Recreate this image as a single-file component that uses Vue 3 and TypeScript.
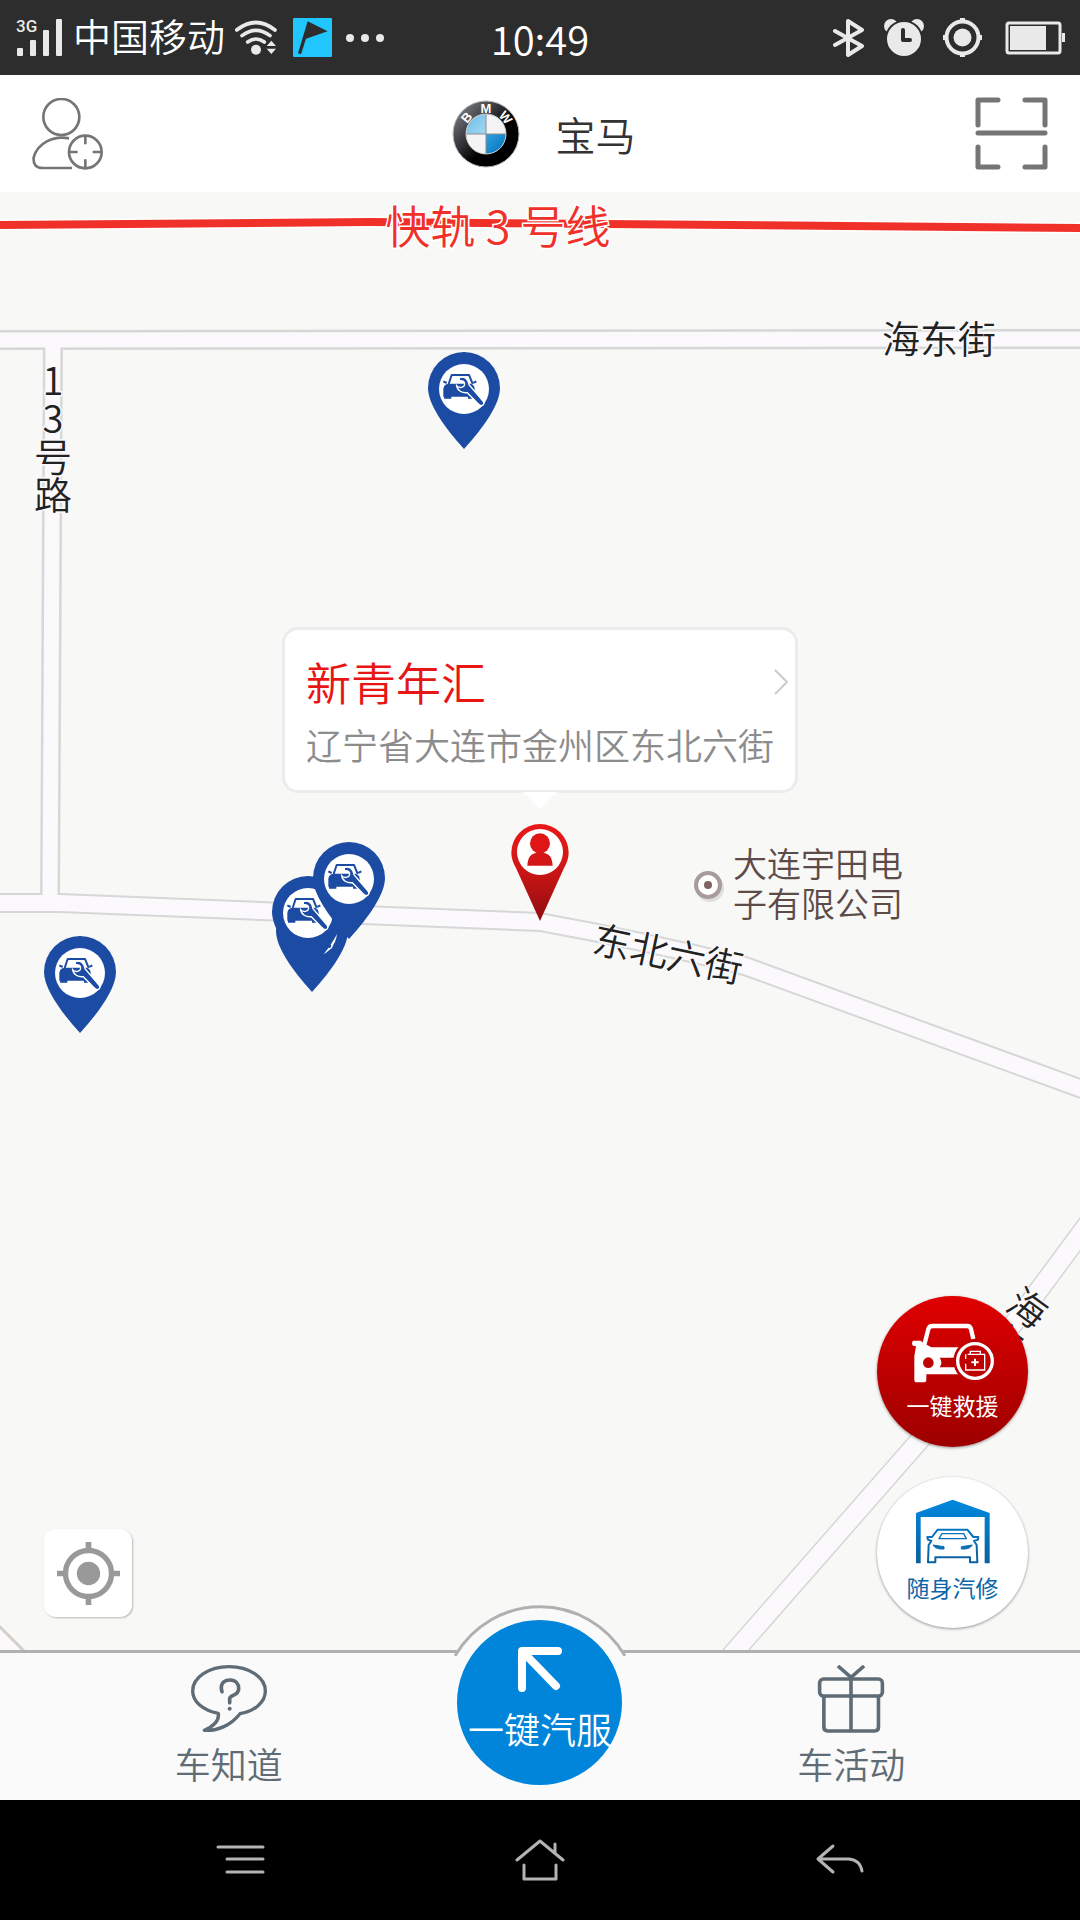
<script setup lang="ts">
interface Pin {
  id: number
  x: number
  y: number
}

interface Road {
  d: string
  casing: number
  surface: number
}

// Pin positions are the top-left corner of the marker on the map canvas.
const pins: Pin[] = [
  { id: 1, x: 428, y: 160 },
  { id: 2, x: 276, y: 703 },
  { id: 3, x: 272, y: 684 },
  { id: 4, x: 313, y: 650 },
  { id: 5, x: 44, y: 744 },
]

const roads: Road[] = [
  { d: 'M-10 148 L1090 147', casing: 20, surface: 15 },
  { d: 'M53 147 L50 711', casing: 20, surface: 15 },
  { d: 'M-10 711 H60 L540 730 Q640 748 745 774 L1090 900', casing: 20, surface: 16 },
  { d: 'M1090 1029 L1022 1121 L919 1249 L728 1467', casing: 21, surface: 18 },
]

const place = { name: '新青年汇', address: '辽宁省大连市金州区东北六街' }
</script>

<template>
  <div class="screen">
    <header class="status">
      <div class="status-side">
        <svg width="48" height="38" viewBox="-1 0 48 38" fill="#e9e9e9" aria-hidden="true">
          <text x="0" y="13" class="net">3G</text>
          <rect x="1" y="29" width="6" height="8" rx="1" />
          <rect x="14" y="21" width="6" height="16" rx="1" />
          <rect x="27" y="11" width="6" height="26" rx="1" />
          <rect x="40" y="0" width="6" height="37" rx="1" />
        </svg>
        <span class="carrier">中国移动</span>
        <svg width="42" height="36" viewBox="708 58 126 108" fill="none" stroke="#e9e9e9" stroke-width="11" stroke-linecap="round" aria-hidden="true">
          <path d="M713 88 Q771 43 828 88" />
          <path d="M729 105 Q771 73 813 105" />
          <path d="M746 124 Q771 106 796 124" />
          <circle cx="771" cy="147" r="15" fill="#e9e9e9" stroke="none" />
          <path d="M803 136 L817 120 L831 136Z M803 144 L817 160 L831 144Z" fill="#e9e9e9" stroke="none" />
        </svg>
        <div class="notices">
          <svg width="39" height="39" viewBox="882 54 117 117" aria-hidden="true">
            <rect x="882" y="54" width="117" height="117" rx="3" fill="#22c6ff" />
            <path d="M926 64 L986 94 L921 116 L906 163 L897 160Z" fill="#2d2d2d" />
          </svg>
          <svg width="38" height="8" viewBox="0 0 38 8" fill="#e9e9e9" aria-hidden="true">
            <circle cx="4" cy="4" r="4" /><circle cx="19" cy="4" r="4" /><circle cx="34" cy="4" r="4" />
          </svg>
        </div>
      </div>
      <time class="clock">10:49</time>
      <div class="status-side end">
        <svg width="32" height="38" viewBox="0 0 32 38" fill="none" stroke="#e9e9e9" stroke-width="4" stroke-linejoin="round" stroke-linecap="round" aria-hidden="true">
          <path d="M2 12 L29 27 L15 36 V2 L29 11 L2 26" />
        </svg>
        <svg width="40" height="37" viewBox="0 0 40 37" aria-hidden="true">
          <circle cx="7" cy="7" r="7" fill="#e9e9e9" /><circle cx="33" cy="7" r="7" fill="#e9e9e9" />
          <circle cx="20" cy="20" r="18" fill="#e9e9e9" stroke="#2d2d2d" stroke-width="2" />
          <path d="M19 11 V21 H26" fill="none" stroke="#2d2d2d" stroke-width="4" stroke-linecap="round" stroke-linejoin="round" />
        </svg>
        <svg width="39" height="39" viewBox="0 0 39 39" fill="none" stroke="#e9e9e9" aria-hidden="true">
          <circle cx="19.5" cy="19.5" r="16" stroke-width="4" />
          <circle cx="19.5" cy="19.5" r="9" fill="#e9e9e9" stroke="none" />
          <path d="M19.5 0 V4 M19.5 35 V39 M0 19.5 H4 M35 19.5 H39" stroke-width="5" />
        </svg>
        <svg width="64" height="34" viewBox="-5 0 64 34" fill="none" aria-hidden="true">
          <rect x="1" y="2" width="53" height="30" rx="2" stroke="#e9e9e9" stroke-width="3" />
          <rect x="4" y="5" width="36" height="24" fill="#e9e9e9" />
          <rect x="56" y="12" width="3" height="9" fill="#e9e9e9" />
        </svg>
      </div>
    </header>

    <div class="topbar">
      <button type="button" class="plain" aria-label="我的">
        <svg width="71" height="72" viewBox="96 294 213 216" fill="none" stroke="#757575" stroke-width="8">
          <circle cx="184" cy="351" r="54" />
          <path d="M207 415 C160 405 112 430 101 472 Q98 504 128 504 H216" />
          <circle cx="256" cy="456" r="49" />
          <path d="M256 407 V433 M256 478 V504 M207 456 H233 M278 456 H304" />
        </svg>
      </button>
      <button type="button" class="plain brand">
        <svg width="68" height="68" viewBox="-34 -34 68 68" aria-hidden="true">
          <defs>
            <linearGradient id="rim" x1="0.1" y1="0.1" x2="0.6" y2="0.6">
              <stop offset="0" stop-color="#77797c" />
              <stop offset="0.55" stop-color="#37383c" />
              <stop offset="1" stop-color="#000" />
            </linearGradient>
            <linearGradient id="skyA" x1="0" y1="0" x2="1" y2="1">
              <stop offset="0" stop-color="#6bbce6" /><stop offset="1" stop-color="#a3d8f2" />
            </linearGradient>
            <linearGradient id="skyB" x1="0" y1="0" x2="1" y2="1">
              <stop offset="0" stop-color="#2ea0e0" /><stop offset="1" stop-color="#0070b8" />
            </linearGradient>
          </defs>
          <circle r="33" fill="url(#rim)" stroke="#b5b5b5" stroke-width="1" />
          <circle r="20" fill="#f4f4f4" />
          <path d="M0 0 V-20 A20 20 0 0 0 -20 0Z" fill="url(#skyA)" />
          <path d="M0 0 V20 A20 20 0 0 0 20 0Z" fill="url(#skyB)" />
          <path d="M-20 0 H20 M0 -20 V20" stroke="#8d8d8d" stroke-width="1" />
          <circle r="20" fill="none" stroke="#c9c9c9" stroke-width="1" />
          <g class="bmw">
            <text y="-21" transform="rotate(-50)">B</text>
            <text y="-21">M</text>
            <text y="-21" transform="rotate(50)">W</text>
          </g>
        </svg>
        <span>宝马</span>
      </button>
      <button type="button" class="plain last" aria-label="扫一扫">
        <svg width="73" height="73" viewBox="0 0 73 73" fill="none" stroke="#757575" stroke-width="5" stroke-linecap="round" stroke-linejoin="round">
          <path d="M3 28 V3 H23 M50 3 H70 V28 M3 50 V70 H23 M50 70 H70 V50 M3 36 H70" />
        </svg>
      </button>
    </div>

    <main class="map">
      <svg class="canvas" viewBox="0 0 1080 1458" preserveAspectRatio="xMidYMid slice">
        <defs>
          <g id="shop-pin">
            <path d="M36 97 C16 75 0 52 0 36 A36 36 0 0 1 72 36 C72 52 56 75 36 97Z" fill="#1c4ba4" />
            <circle cx="36" cy="37" r="25" fill="#fff" />
            <g transform="scale(0.3333)">
              <path d="M62 96 L71 69 H123 L134 96" fill="none" stroke="#1c4ba4" stroke-width="6" stroke-linejoin="round" />
              <path d="M46 134 V112 Q46 97 62 95 H128 Q140 98 140 112 V134Z" fill="#1c4ba4" />
              <path d="M46 88 L56 93 M145 88 L136 93" stroke="#1c4ba4" stroke-width="6" />
              <path d="M48 132 H70 V140 H48Z M120 132 H132 V140 H120Z" fill="#1c4ba4" />
              <path d="M94 77 C108 72 121 80 123 98 L165 147 C173 158 160 166 151 156 L118 122 C102 124 88 116 86 101 C94 110 108 107 110 97 C111 89 104 85 94 86Z" fill="#1c4ba4" stroke="#fff" stroke-width="4" />
            </g>
          </g>
        </defs>

        <path d="M-5 1430 L28 1463 H-5Z" fill="#fbf9fb" stroke="#d4cfc8" stroke-width="3" />
        <path v-for="road in roads" :key="'c' + road.d" :d="road.d" fill="none" stroke="#d6d7d7" :stroke-width="road.casing" />
        <path v-for="road in roads" :key="'s' + road.d" :d="road.d" fill="none" stroke="#fbf9fb" :stroke-width="road.surface" />

        <path d="M-5 33 L370 30 L1085 36" fill="none" stroke="#fff" stroke-width="11" />
        <path d="M-5 33 L370 30 L1085 36" fill="none" stroke="#f0312a" stroke-width="8" />

        <g class="labels">
          <text class="rail" x="498" y="52">快轨 3 号线</text>
          <text x="939" y="161">海东街</text>
          <text class="upright" x="53" y="246">13号路</text>
          <text transform="translate(668 762) rotate(12)" y="14">东北六街</text>
          <text transform="translate(1027 1117) rotate(36)" y="13">海</text>
          <text transform="translate(1003 1149) rotate(36)" y="13">东</text>
        </g>

        <g>
          <circle cx="710" cy="696" r="14" fill="#000" opacity="0.1" />
          <circle cx="708" cy="693" r="12" fill="#fff" stroke="#a89c9a" stroke-width="4" />
          <circle cx="708" cy="693" r="4" fill="#7d6461" />
          <text class="poi" x="733" y="685">大连宇田电</text>
          <text class="poi" x="733" y="725">子有限公司</text>
        </g>

        <use v-for="pin in pins" :key="pin.id" href="#shop-pin" :x="pin.x" :y="pin.y" />
      </svg>

      <div class="here">
        <button type="button" class="callout">
          <span class="callout-head">
            <strong>{{ place.name }}</strong>
            <svg width="14" height="26" viewBox="0 0 14 26" fill="none" stroke="#ccc" stroke-width="2" aria-hidden="true">
              <path d="M1 1 L13 13 L1 25" />
            </svg>
          </span>
          <span class="callout-text">{{ place.address }}</span>
        </button>
        <svg class="tail" width="34" height="17" viewBox="0 0 34 17" aria-hidden="true"><path d="M0 0 H34 L17 17Z" fill="#fff" /></svg>
        <svg class="me" width="58" height="97" viewBox="0 0 172 291" aria-hidden="true">
          <defs>
            <linearGradient id="me-red" x1="0" y1="0" x2="0" y2="1">
              <stop offset="0" stop-color="#ea1818" /><stop offset="0.4" stop-color="#d51616" /><stop offset="1" stop-color="#8f0d10" />
            </linearGradient>
          </defs>
          <path d="M86 291 L14 132 Q0 108 0 86 A86 86 0 0 1 172 86 Q172 108 158 132Z" fill="url(#me-red)" />
          <circle cx="86" cy="84" r="69" fill="#fff" />
          <circle cx="86" cy="58" r="30" fill="#de1616" />
          <path d="M48 125 Q50 88 76 87 Q86 80 96 87 Q122 88 124 125Z" fill="#d51616" />
        </svg>
      </div>

      <button type="button" class="locate" aria-label="定位">
        <svg width="63" height="63" viewBox="0 0 189 189" fill="none" stroke="#999">
          <circle cx="94.5" cy="94.5" r="69" stroke-width="16" />
          <circle cx="94.5" cy="94.5" r="35" fill="#999" stroke="none" />
          <path d="M94.5 0 V26 M94.5 163 V189 M0 94.5 H26 M163 94.5 H189" stroke-width="17" />
        </svg>
      </button>

      <div class="actions">
        <button type="button" class="round rescue">
          <svg width="84" height="62" viewBox="216 367 252 186" fill="none" aria-hidden="true">
            <path d="M256 435 L268 388 Q271 379 280 379 H385 Q393 379 396 388 L403 418" stroke="#fff" stroke-width="13" />
            <path d="M222 423 H244 Q250 424 253 432 L266 437 L277 443 H360 V524 H262 V540 Q262 548 254 548 H233 Q226 548 226 540 V470 L231 440 L222 438 Q216 430 222 423Z" fill="#fff" />
            <circle cx="268" cy="489" r="16" fill="#bd0000" />
            <path d="M302 474 H350 V503 H302 Q312 488 302 474Z" fill="#bd0000" />
            <circle cx="408" cy="484" r="65" fill="#bf0000" />
            <circle cx="408" cy="484" r="52" stroke="#fff" stroke-width="10" />
            <path d="M386 464 H437 V511 H380 V492 M380 478 V464 M394 462 V455 H424 V462" stroke="#fff" stroke-width="4" />
            <path d="M408 477 V499 M397 488 H419" stroke="#fff" stroke-width="6" />
          </svg>
          <span>一键救援</span>
        </button>
        <button type="button" class="round repair">
          <svg width="74" height="65" viewBox="226 896 222 195" fill="none" aria-hidden="true">
            <defs>
              <linearGradient id="garage" x1="0" y1="896" x2="0" y2="1090" gradientUnits="userSpaceOnUse">
                <stop offset="0" stop-color="#0089e0" /><stop offset="1" stop-color="#0a5f9e" />
              </linearGradient>
            </defs>
            <path d="M226 938 L336 898 L447 938 V1089 H432 V950 H240 V1089 H226Z" fill="url(#garage)" />
            <g stroke="url(#garage)" stroke-width="6" stroke-linejoin="round">
              <path d="M274 1010 H260 L262 1018 L272 1022 L264 1034 L262 1086 H284 V1071 H388 V1086 H410 L408 1034 L400 1022 L412 1018 L413 1010 H398 L380 988 H291Z" />
              <path d="M304 1000 H369 L377 1015 H295Z" stroke-width="4" />
            </g>
            <path d="M277 1034 L310 1039 V1046 Q285 1048 277 1034Z M395 1034 L362 1039 V1046 Q387 1048 395 1034Z" fill="#0a6fb5" stroke="#0a6fb5" stroke-width="3" />
          </svg>
          <span>随身汽修</span>
        </button>
      </div>
    </main>

    <nav class="tabs">
      <a href="#know" class="tab">
        <svg width="76" height="68" viewBox="570 495 228 204" fill="none" stroke="#5f6c76" stroke-linecap="round" stroke-linejoin="round" aria-hidden="true">
          <path d="M652 640 C605 630 575 605 575 573 C575 532 624 500 684 500 C744 500 793 532 793 573 C793 608 760 633 717 641 C690 675 650 694 610 691 C640 678 655 660 652 640Z" stroke-width="10" />
          <path d="M663 575 C655 548 672 540 687 540 C704 540 713 552 713 566 C713 588 686 584 686 596 V608" stroke-width="11" />
          <circle cx="686" cy="626" r="6" fill="#5f6c76" stroke="none" />
        </svg>
        <span>车知道</span>
      </a>
      <a href="#service" class="service">
        <svg class="arch" width="172" height="51" viewBox="0 0 172 51" aria-hidden="true">
          <path d="M1 51 A98 98 0 0 1 171 51Z" fill="#fafafa" />
          <path d="M1 51 A98 98 0 0 1 171 51" fill="none" stroke="#b0b0b0" stroke-width="3" />
        </svg>
        <span class="disc">
          <svg width="44" height="46" viewBox="0 0 44 46" fill="none" stroke="#fff" stroke-width="8" stroke-linecap="round" stroke-linejoin="round" aria-hidden="true">
            <path d="M4 41 V4 H40 M6 6 L38 39" />
          </svg>
          <span>一键汽服</span>
        </span>
      </a>
      <a href="#activity" class="tab">
        <svg width="68" height="68" viewBox="351 74 204 208" fill="none" stroke="#5f6c76" stroke-width="11" stroke-linejoin="round" aria-hidden="true">
          <rect x="357" y="117" width="192" height="52" rx="12" />
          <path d="M370 170 V264 Q370 276 382 276 H525 Q537 276 537 264 V170" />
          <path d="M453 112 V276 M413 77 L453 112 L493 77" />
        </svg>
        <span>车活动</span>
      </a>
    </nav>

    <footer class="system">
      <button type="button" class="plain" aria-label="菜单">
        <svg width="50" height="42" viewBox="0 0 50 42" fill="none" stroke="#b4b4b4" stroke-width="3" stroke-linecap="round">
          <path d="M3 8 H48 M12 20 H48 M12 33 H48" />
        </svg>
      </button>
      <button type="button" class="plain" aria-label="主页">
        <svg width="50" height="42" viewBox="0 0 50 42" fill="none" stroke="#b4b4b4" stroke-width="3" stroke-linecap="round" stroke-linejoin="round">
          <path d="M2 21 L25 2 L48 21 M40 5 V13 M9 26 V40 H41 V26" />
        </svg>
      </button>
      <button type="button" class="plain" aria-label="返回">
        <svg width="50" height="42" viewBox="0 0 50 42" fill="none" stroke="#b4b4b4" stroke-width="3" stroke-linecap="round" stroke-linejoin="round">
          <path d="M18 7 L3 20 L18 33 M3 20 H34 Q45 21 47 32" />
        </svg>
      </button>
    </footer>
  </div>
</template>

<style>
body {
  background: #000;
}
</style>

<style scoped>
.screen {
  display: flex;
  flex-direction: column;
  min-height: 100vh;
  font-family: "Noto Sans CJK SC", "Noto Sans", sans-serif;
  font-weight: 350;
}

svg {
  display: block;
  flex: none;
}

button,
a {
  font: inherit;
  color: inherit;
  text-decoration: none;
}

.plain {
  display: flex;
  padding: 0;
  border: 0;
  background: none;
}

.status {
  display: grid;
  grid-template-columns: 1fr auto 1fr;
  align-items: center;
  height: 75px;
  padding: 0 15px;
  background: #2d2d2d;
  color: #fff;
}

.status-side {
  display: flex;
  align-items: center;
  gap: 10px;
}

.status-side.end {
  justify-content: flex-end;
  gap: 19px;
}

.notices {
  display: flex;
  align-items: center;
  gap: 14px;
  padding-left: 6px;
}

.net {
  font: 500 17px Roboto, sans-serif;
}

.carrier {
  font-size: 38px;
  line-height: 48px;
  padding-bottom: 6px;
}

.clock {
  font-size: 40px;
  line-height: 48px;
}

.topbar {
  display: grid;
  grid-template-columns: 1fr auto 1fr;
  align-items: center;
  height: 117px;
  padding: 0 32px;
  background: #fff;
}

.brand {
  align-items: center;
  gap: 36px;
  padding-left: 7px;
  font-size: 40px;
  line-height: 60px;
  color: #333;
}

.bmw text {
  font: 700 13px "Liberation Sans", sans-serif;
  fill: #fff;
  text-anchor: middle;
}

.last {
  justify-self: end;
}

.map {
  position: relative;
  flex: 1;
  min-height: 900px;
  overflow: hidden;
  background: #f8f8f7;
}

.canvas {
  position: absolute;
  inset: 0;
  width: 100%;
  height: 100%;
}

.labels text {
  font-size: 38px;
  text-anchor: middle;
  fill: #222;
  stroke: #fbf9fb;
  stroke-width: 3px;
  paint-order: stroke;
}

.labels .rail {
  font-size: 45px;
  fill: #f0312a;
  stroke: #fff;
}

.labels .upright {
  writing-mode: vertical-rl;
  text-orientation: upright;
}

.poi {
  font-size: 34px;
  fill: #5c4b47;
}

.here {
  position: absolute;
  left: 50%;
  bottom: 50%;
  transform: translateX(-50%);
  display: flex;
  flex-direction: column;
  align-items: center;
}

.callout {
  display: flex;
  flex-direction: column;
  gap: 8px;
  padding: 22px 21px;
  border: 3px solid #ececec;
  border-radius: 16px;
  background: #fff;
  text-align: left;
  white-space: nowrap;
}

.callout-head {
  display: flex;
  align-items: center;
  justify-content: space-between;
  margin-right: -14px;
}

.callout-head strong {
  font-size: 45px;
  line-height: 60px;
  font-weight: inherit;
  color: #e81515;
}

.callout-text {
  font-size: 36px;
  line-height: 48px;
  color: #8c8c8c;
}

.tail {
  margin-top: -1px;
}

.me {
  margin-top: 15px;
}

.locate {
  position: absolute;
  left: 44px;
  bottom: 33px;
  display: grid;
  place-items: center;
  width: 88px;
  height: 88px;
  padding: 0;
  border: 0;
  border-radius: 12px;
  background: #fff;
  box-shadow: 1px 1px 2px rgba(0, 0, 0, 0.25);
}

.actions {
  position: absolute;
  right: 52px;
  bottom: 22px;
  display: flex;
  flex-direction: column;
  gap: 30px;
}

.round {
  display: flex;
  flex-direction: column;
  align-items: center;
  width: 151px;
  height: 151px;
  padding: 26px 0 0;
  border: 0;
  border-radius: 50%;
  font-size: 23px;
  line-height: 32px;
  font-weight: 400;
  box-shadow: 0 1px 3px rgba(0, 0, 0, 0.4);
}

.round span {
  margin-top: 5px;
}

.rescue {
  background: linear-gradient(#e00000, #9c0000);
  color: #fff;
}

.repair {
  padding-top: 22px;
  background: #fff;
  color: #0a66a8;
}

.repair span {
  margin-top: 7px;
}

.tabs {
  position: relative;
  display: grid;
  grid-template-columns: repeat(3, 1fr);
  height: 147px;
  padding: 0 73px;
  border-top: 3px solid #b0b0b0;
  background: #fafafa;
  color: #5f6c76;
  font-size: 36px;
  line-height: 48px;
}

.tab {
  display: flex;
  flex-direction: column;
  align-items: center;
  gap: 6px;
  padding-top: 12px;
}

.service {
  display: flex;
  flex-direction: column;
  align-items: center;
  margin-top: -48px;
}

.disc {
  display: flex;
  flex-direction: column;
  align-items: center;
  gap: 11px;
  width: 165px;
  height: 138px;
  margin-top: -36px;
  padding-top: 27px;
  border-radius: 50%;
  background: #0085da;
  color: #fff;
  white-space: nowrap;
  position: relative;
}

.system {
  display: grid;
  grid-template-columns: repeat(3, 1fr);
  justify-items: center;
  align-items: center;
  height: 120px;
  padding: 0 90px;
  background: #000;
}
</style>
